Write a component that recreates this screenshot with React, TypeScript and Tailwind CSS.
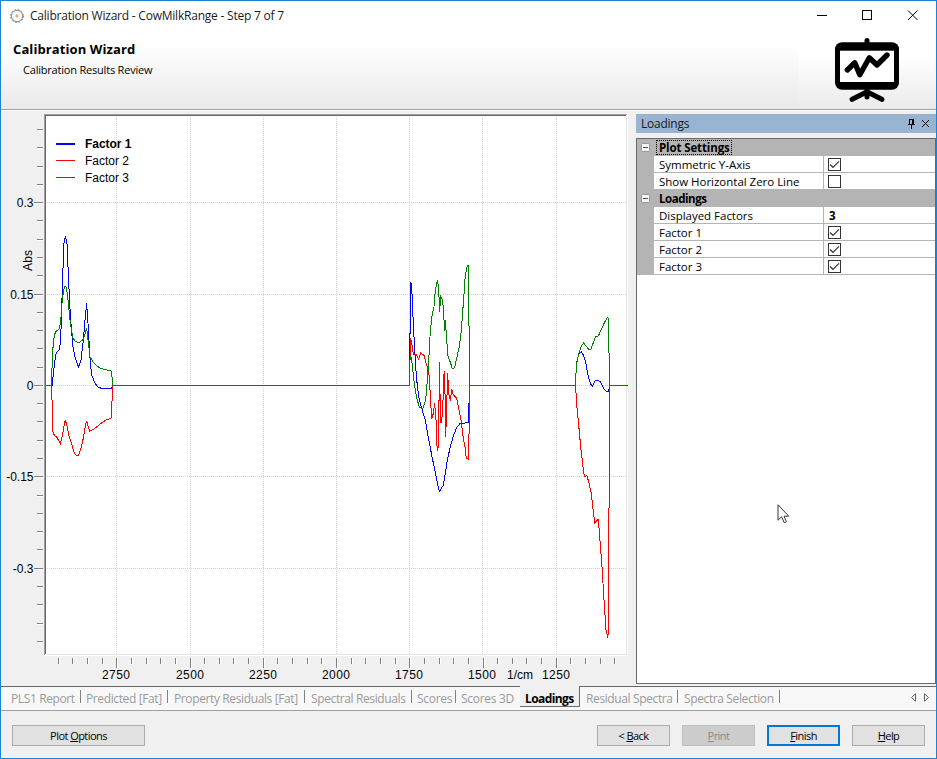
import React from "react";

const UI = "font-['Open_Sans','Noto_Sans',sans-serif]";

/* Each trace is digitised on a grid three times finer than the plot. */
const BAND_A = {
  blue: "154,556 157,556 160,520 165,480 169,458 178,450 182,420 184,360 188,230 192,130 196,108 201,130 204,200 209,310 214,385 219,440 226,475 235,502 243,480 250,420 256,350 260,310 264,370 268,440 271,490 275,525 285,550 295,562 305,565 335,565 337,556",
  red: "154,556 157,620 159,695 163,706 170,711 181,731 186,712 192,678 196,660 202,682 208,712 216,735 222,757 228,766 236,765 244,740 251,710 256,678 260,662 264,678 269,694 280,688 290,681 302,671 318,660 334,654 336,604 338,556",
  green: "138,556 154,556 157,480 160,425 166,396 178,387 182,365 186,310 190,275 194,260 198,261 202,280 206,320 211,370 218,412 226,424 238,428 250,418 256,398 260,385 264,420 270,470 282,490 298,503 315,509 334,513 337,540 338,556",
};
const BAND_B = {
  blue: "59,436 59,282 61,282 62,126 65,138 68,210 73,310 79,410 86,470 96,508 106,540 116,598 126,650 136,698 142,728 146,748 149,754 154,745 160,736 165,706 172,660 181,620 190,588 200,563 210,551 224,549 236,546 236,492 239,492",
  red: "59,394 62,295 66,316 70,343 79,344 86,357 92,339 102,346 110,375 118,408 121,470 125,538 130,520 134,490 138,540 141,618 143,632 146,612 148,367 150,460 153,548 158,520 161,405 164,394 167,592 170,500 173,400 176,460 181,482 185,448 190,465 200,475 206,505 213,540 219,588 225,622 229,655 235,658 238,545 238,436",
  green: "0,436 59,436 60,360 62,346 66,370 73,432 80,475 89,503 98,506 107,480 112,420 116,365 120,290 125,232 132,200 136,150 142,121 146,145 149,215 152,170 158,180 162,240 165,272 166,240 170,300 174,348 182,370 187,387 194,382 200,355 208,320 214,270 220,190 226,105 232,78 236,76 236,256 239,260 239,436 361,436",
};
const BAND_C = {
  blue: "77,286 78,250 80,218 86,192 94,186 100,195 107,216 112,246 117,266 122,282 127,289 131,280 136,271 145,272 152,276 158,290 165,301 172,306 177,306 177,296",
  red: "77,288 80,345 86,404 92,470 98,522 103,560 111,557 117,580 123,606 129,656 134,698 140,692 145,688 149,740 156,830 162,930 168,1020 173,1039 176,1028 176,656 178,650 178,286",
  green: "0,286 77,286 78,250 81,217 86,192 94,168 101,159 108,168 116,178 123,177 130,158 136,140 145,138 154,118 164,96 172,83 176,86 177,188 178,192 178,286 234,286",
};

function Band({ at, data }: { at: string; data: { blue: string; red: string; green: string } }) {
  return (
    <g transform={at} fill="none" strokeWidth="1">
      <polyline vectorEffect="non-scaling-stroke" stroke="#0000ff" points={data.blue} />
      <polyline vectorEffect="non-scaling-stroke" stroke="#ff0000" points={data.red} />
      <polyline vectorEffect="non-scaling-stroke" stroke="#008000" points={data.green} />
    </g>
  );
}

const xTicks = Array.from({ length: 39 }, (_, i) => i - 4);
const yTicks = Array.from({ length: 29 }, (_, i) => i - 14);
const xLabels: [string, number][] = [["2750", 116], ["2500", 190], ["2250", 263], ["2000", 336], ["1750", 409], ["1500", 482], ["1/cm", 520], ["1250", 556]];
const yLabels: [string, number][] = [["0.3", 202], ["0.15", 294], ["0", 385], ["-0.15", 476], ["-0.3", 568]];

function Chart() {
  return (
    <svg width="632" height="575" viewBox="1 111 632 575" className="block shrink-0 font-['Liberation_Sans',Arial,sans-serif] text-[12px]">
      <g shapeRendering="crispEdges">
        <rect x="44" y="114" width="584" height="542" fill="#fff" />
        <path d="M44.5 655V114.5H627" fill="none" stroke="#a0a0a0" />
        <path d="M45.5 654V115.5H626" fill="none" stroke="#696969" />
        <path d="M46 654.5H626.5V116" fill="none" stroke="#e3e3e3" />
        {[116, 190, 263, 336, 409, 482, 556].map((x) => (
          <path key={x} d={`M${x + 0.5} 117V654`} stroke="#d4d4d4" strokeDasharray="1 1" />
        ))}
        {[202, 294, 385, 476, 568].map((y) => (
          <path key={y} d={`M47 ${y + 0.5}H626`} stroke="#d4d4d4" strokeDasharray="1 1" />
        ))}
        {yTicks.map((k) => {
          const y = Math.floor(385.4 + k * 18.28) + 0.5;
          return (
            <g key={k}>
              <path d={`M${k % 5 ? 37 : 34} ${y + 1}H43`} stroke="#fff" />
              <path d={`M${k % 5 ? 37 : 34} ${y}H43`} stroke="#808080" />
            </g>
          );
        })}
        {xTicks.map((k) => {
          const x = Math.floor(116.75 + k * 14.65) + 0.5;
          return (
            <g key={k}>
              <path d={`M${x + 1} 658V${k % 5 ? 664 : 668}`} stroke="#fff" />
              <path d={`M${x} 658V${k % 5 ? 664 : 668}`} stroke="#808080" />
            </g>
          );
        })}
        <Band at="translate(0 200) scale(.33333)" data={BAND_A} />
        <Band at="translate(390 240) scale(.33333)" data={BAND_B} />
        <Band at="translate(550 290) scale(.33333)" data={BAND_C} />
        <path d="M113 385.5H409M470 385.5H576" stroke="#008000" />
        <path d="M56 143.5H75" stroke="#0000ff" strokeWidth="2" />
        <path d="M56 160.5H75" stroke="#ff0000" />
        <path d="M56 177.5H75" stroke="#008000" />
      </g>
      <g fill="#000">
        <text x="85" y="148" fontWeight="bold" textLength="46.5">Factor 1</text>
        <text x="85" y="165" textLength="44">Factor 2</text>
        <text x="85" y="182" textLength="44">Factor 3</text>
        {yLabels.map(([t, y]) => (
          <text key={t} x="33.5" y={y + 5} textAnchor="end">{t}</text>
        ))}
        {xLabels.map(([t, x]) => (
          <text key={t} x={x} y="679" textAnchor="middle" textLength={t === "1/cm" ? 26 : 28}>{t}</text>
        ))}
        <text transform="translate(31.5 271) rotate(-90)" textLength="21">Abs</text>
      </g>
    </svg>
  );
}

function Check({ on }: { on: boolean }) {
  return (
    <svg width="13" height="13" viewBox="0 0 13 13" className="block">
      <rect x=".5" y=".5" width="12" height="12" fill="#fff" stroke="#333" />
      {on && <path d="M2 6.5L5 9.3L11 3.3" fill="none" stroke="#333" strokeWidth="1.2" />}
    </svg>
  );
}

function Group({ name, focused }: { name: string; focused?: boolean }) {
  return (
    <div className="flex h-[17px] items-start bg-[#b4b4b4]">
      <div className="flex w-[17px] justify-center pt-1">
        <svg width="9" height="9" viewBox="0 0 9 9">
          <rect x=".5" y=".5" width="8" height="8" rx="1" fill="#f4f4f4" stroke="#969696" />
          <path d="M2 4.5H7" stroke="#3c50a0" />
        </svg>
      </div>
      <span className={"ml-[2px] mt-px h-[15px] whitespace-nowrap px-[3px] text-[11.5px] font-bold leading-[15px] " + (focused ? "w-[76px] tracking-[-0.12px] outline-1 -outline-offset-1 outline-dotted outline-black" : "tracking-[-0.45px]")}>
        {name}
      </span>
    </div>
  );
}

function Row({ name, children }: { name: string; children: React.ReactNode }) {
  return (
    <div className="flex h-[17px]">
      <div className="w-[17px] bg-[#b4b4b4]" />
      <div className="w-[169px] whitespace-nowrap border-b border-[#b4b4b4] pl-[5px] text-[11.5px] leading-[17px] tracking-[-0.02px]">{name}</div>
      <div className="flex flex-1 items-center border-b border-l border-[#b4b4b4] pl-1 text-[11.5px] font-bold leading-[16px]">{children}</div>
    </div>
  );
}

function SidePanel() {
  return (
    <aside className="mt-[3px] flex w-[300px] flex-col">
      <div className="flex h-[19px] items-center bg-[#99b4d1] pl-[5px] text-[12px] text-[#1a1a1a]">
        <span className="tracking-[-0.25px]">Loadings</span>
        <svg width="9" height="10" viewBox="0 0 9 10" className="ml-auto" shapeRendering="crispEdges">
          <path d="M2.5 0V5M2 .5H6M0.5 5.5H8M4.5 6V9.5" fill="none" stroke="#000" />
          <path d="M6 0V5" stroke="#000" strokeWidth="2" />
        </svg>
        <svg width="9" height="9" viewBox="0 0 9 9" className="ml-[5px] mr-[6px]">
          <path d="M1 1L8 8M8 1L1 8" stroke="#000" />
        </svg>
      </div>
      <div className="mt-[5px] h-[546px] border border-[#696969] bg-white">
        <Group name="Plot Settings" focused />
        <Row name="Symmetric Y-Axis"><Check on /></Row>
        <Row name="Show Horizontal Zero Line"><Check on={false} /></Row>
        <Group name="Loadings" />
        <Row name="Displayed Factors"><span className="pl-px pt-px">3</span></Row>
        <Row name="Factor 1"><Check on /></Row>
        <Row name="Factor 2"><Check on /></Row>
        <Row name="Factor 3"><Check on /></Row>
      </div>
    </aside>
  );
}

const TAB = "h-[23px] shrink-0 whitespace-nowrap pt-[3px] leading-[18px] text-[#9a9a9a]";

function Sep() {
  return <div className="mt-[3px] h-[13px] w-px shrink-0 bg-[#808080]" />;
}

function TabBar() {
  return (
    <nav className="flex h-[25px] border-b border-[#a0a0a0] bg-[#f8f8f8] text-[12px] tracking-[-0.38px]">
      <div className="flex w-[519px] border-t border-[#696969]">
        <div className={TAB + " w-[79px] pl-[10px]"}>PLS1 Report</div><Sep />
        <div className={TAB + " w-[86px] pl-[5px]"}>Predicted [Fat]</div><Sep />
        <div className={TAB + " w-[136px] pl-[6px]"}>Property Residuals [Fat]</div><Sep />
        <div className={TAB + " w-[106px] pl-[6px]"}>Spectral Residuals</div><Sep />
        <div className={TAB + " w-[43px] pl-[5px] tracking-[-0.3px]"}>Scores</div><Sep />
        <div className={TAB + " w-[63px] pl-[5px] tracking-[-0.3px]"}>Scores 3D</div>
      </div>
      <div className="h-[21px] w-[60px] border-b border-r border-[#696969] bg-[#f0f0f0] pl-[5px] pt-1 font-bold leading-[18px] tracking-[-0.6px] text-black">Loadings</div>
      <div className="flex flex-1 border-t border-[#696969]">
        <div className={TAB + " w-[97px] pl-[6px]"}>Residual Spectra</div><Sep />
        <div className={TAB + " w-[101px] pl-[6px]"}>Spectra Selection</div><Sep />
        <svg width="20" height="9" viewBox="0 0 20 9" className="ml-auto mr-[6px] mt-[6px]">
          <path d="M5.5 .8V8.2L1.5 4.5ZM14.5 .8V8.2L18.5 4.5Z" fill="none" stroke="#606060" />
        </svg>
      </div>
    </nav>
  );
}

const BTN = "flex h-[21px] items-center justify-center border pt-px text-[11px] tracking-[-0.55px]";

export default function App() {
  return (
    <div className={"relative flex h-[759px] w-[937px] flex-col overflow-hidden border border-[#1883d7] bg-[#f0f0f0] text-black " + UI}>
      <header className="flex h-[109px] flex-col border-b border-[#a0a0a0] bg-[linear-gradient(#fff_44px,#e9e9e9_108px)]">
        <div className="flex h-[30px] items-center pl-2">
          <svg width="16" height="16" viewBox="0 0 16 16">
            <circle cx="8" cy="8" r="5.7" fill="#f6f8f8" stroke="#8c8c8c" strokeWidth="1" />
            <circle cx="8" cy="8" r="6.5" fill="none" stroke="#8c8c8c" strokeWidth="1" strokeDasharray="1.8 1.6" />
            <circle cx="8" cy="8" r="1.4" fill="#e8a27c" />
          </svg>
          <span className="ml-[5px] whitespace-nowrap text-[12px] tracking-[-0.22px] text-[#1a1a1a]">Calibration Wizard - CowMilkRange - Step 7 of 7</span>
          <svg width="101" height="11" viewBox="0 0 101 11" className="ml-auto mr-[18px] -mt-px" fill="none" stroke="#000">
            <path d="M0 5.5H10" shapeRendering="crispEdges" />
            <rect x="45.5" y=".5" width="9" height="9" />
            <path d="M91 .5L100.5 10M100.5 .5L91 10" />
          </svg>
        </div>
        <div className="flex flex-1 justify-between">
          <div className="whitespace-nowrap">
            <h1 className="pl-3 pt-[9px] text-[13px] font-bold leading-[18px] tracking-[0.1px]">Calibration Wizard</h1>
            <p className="pl-[22px] pt-[4px] text-[11px] leading-[16px] tracking-[-0.2px]">Calibration Results Review</p>
          </div>
          <svg width="137" height="77" viewBox="799 31 137 77" className="bg-[linear-gradient(#fff_25px,#ebebeb_77px)]">
            <path d="M867 40.5V45M867 90V97" stroke="#000" strokeWidth="5" strokeLinecap="round" />
            <rect x="835" y="42.3" width="64" height="47.5" rx="7" />
            <rect x="840" y="50.7" width="54" height="31.3" fill="#fff" />
            <path d="M847.3 70L854.8 62.8L859.8 74.8L869.3 57.8L877 65L887 55" fill="none" stroke="#000" strokeWidth="5.4" strokeLinecap="round" strokeLinejoin="round" />
            <path d="M852.2 99.3L867 91.8L881.8 99.3" fill="none" stroke="#000" strokeWidth="5.2" strokeLinecap="round" />
          </svg>
        </div>
      </header>
      <main className="flex h-[576px] border-t border-white">
        <Chart />
        <div className="w-[3px]" />
        <SidePanel />
      </main>
      <TabBar />
      <footer className="flex pl-[11px] pr-[11px] pt-[14px]">
        <button className={BTN + " w-[133px] border-[#adadad] bg-[#e1e1e1]"}><span>Plot <u className="underline-offset-1">O</u>ptions</span></button>
        <div className="ml-auto flex gap-3">
          <button className={BTN + " w-[73px] border-[#adadad] bg-[#e1e1e1]"}><span>&lt; <u className="underline-offset-1">B</u>ack</span></button>
          <button className={BTN + " w-[73px] border-[#bfbfbf] bg-[#cccccc] text-[#8a8a8a]"}><span><u className="underline-offset-1">P</u>rint</span></button>
          <button className={BTN + " w-[73px] border-2 border-[#0078d7] bg-[#e1e1e1]"}><span><u className="underline-offset-1">F</u>inish</span></button>
          <button className={BTN + " w-[73px] border-[#adadad] bg-[#e1e1e1]"}><span><u className="underline-offset-1">H</u>elp</span></button>
        </div>
      </footer>
      <svg width="13" height="20" viewBox="0 0 13 20" className="absolute left-[776px] top-[503px]">
        <path d="M1 .8V16.2L4.6 12.8L7 18.4Q8.3 19 9.4 17.8L7 12.2H11.8Z" fill="#fff" stroke="#33303c" strokeWidth="1" />
      </svg>
      <div className="absolute -left-px -top-px h-[5px] w-[5px] bg-white" />
      <div className="absolute -right-px -top-px h-[5px] w-[5px] bg-white" />
      <svg width="5" height="5" viewBox="0 0 5 5" className="absolute -bottom-px -left-px"><path d="M0 0L5 5H0Z" fill="#fff" /></svg>
      <svg width="5" height="5" viewBox="0 0 5 5" className="absolute -bottom-px -right-px"><path d="M5 0V5H0Z" fill="#fff" /></svg>
    </div>
  );
}
